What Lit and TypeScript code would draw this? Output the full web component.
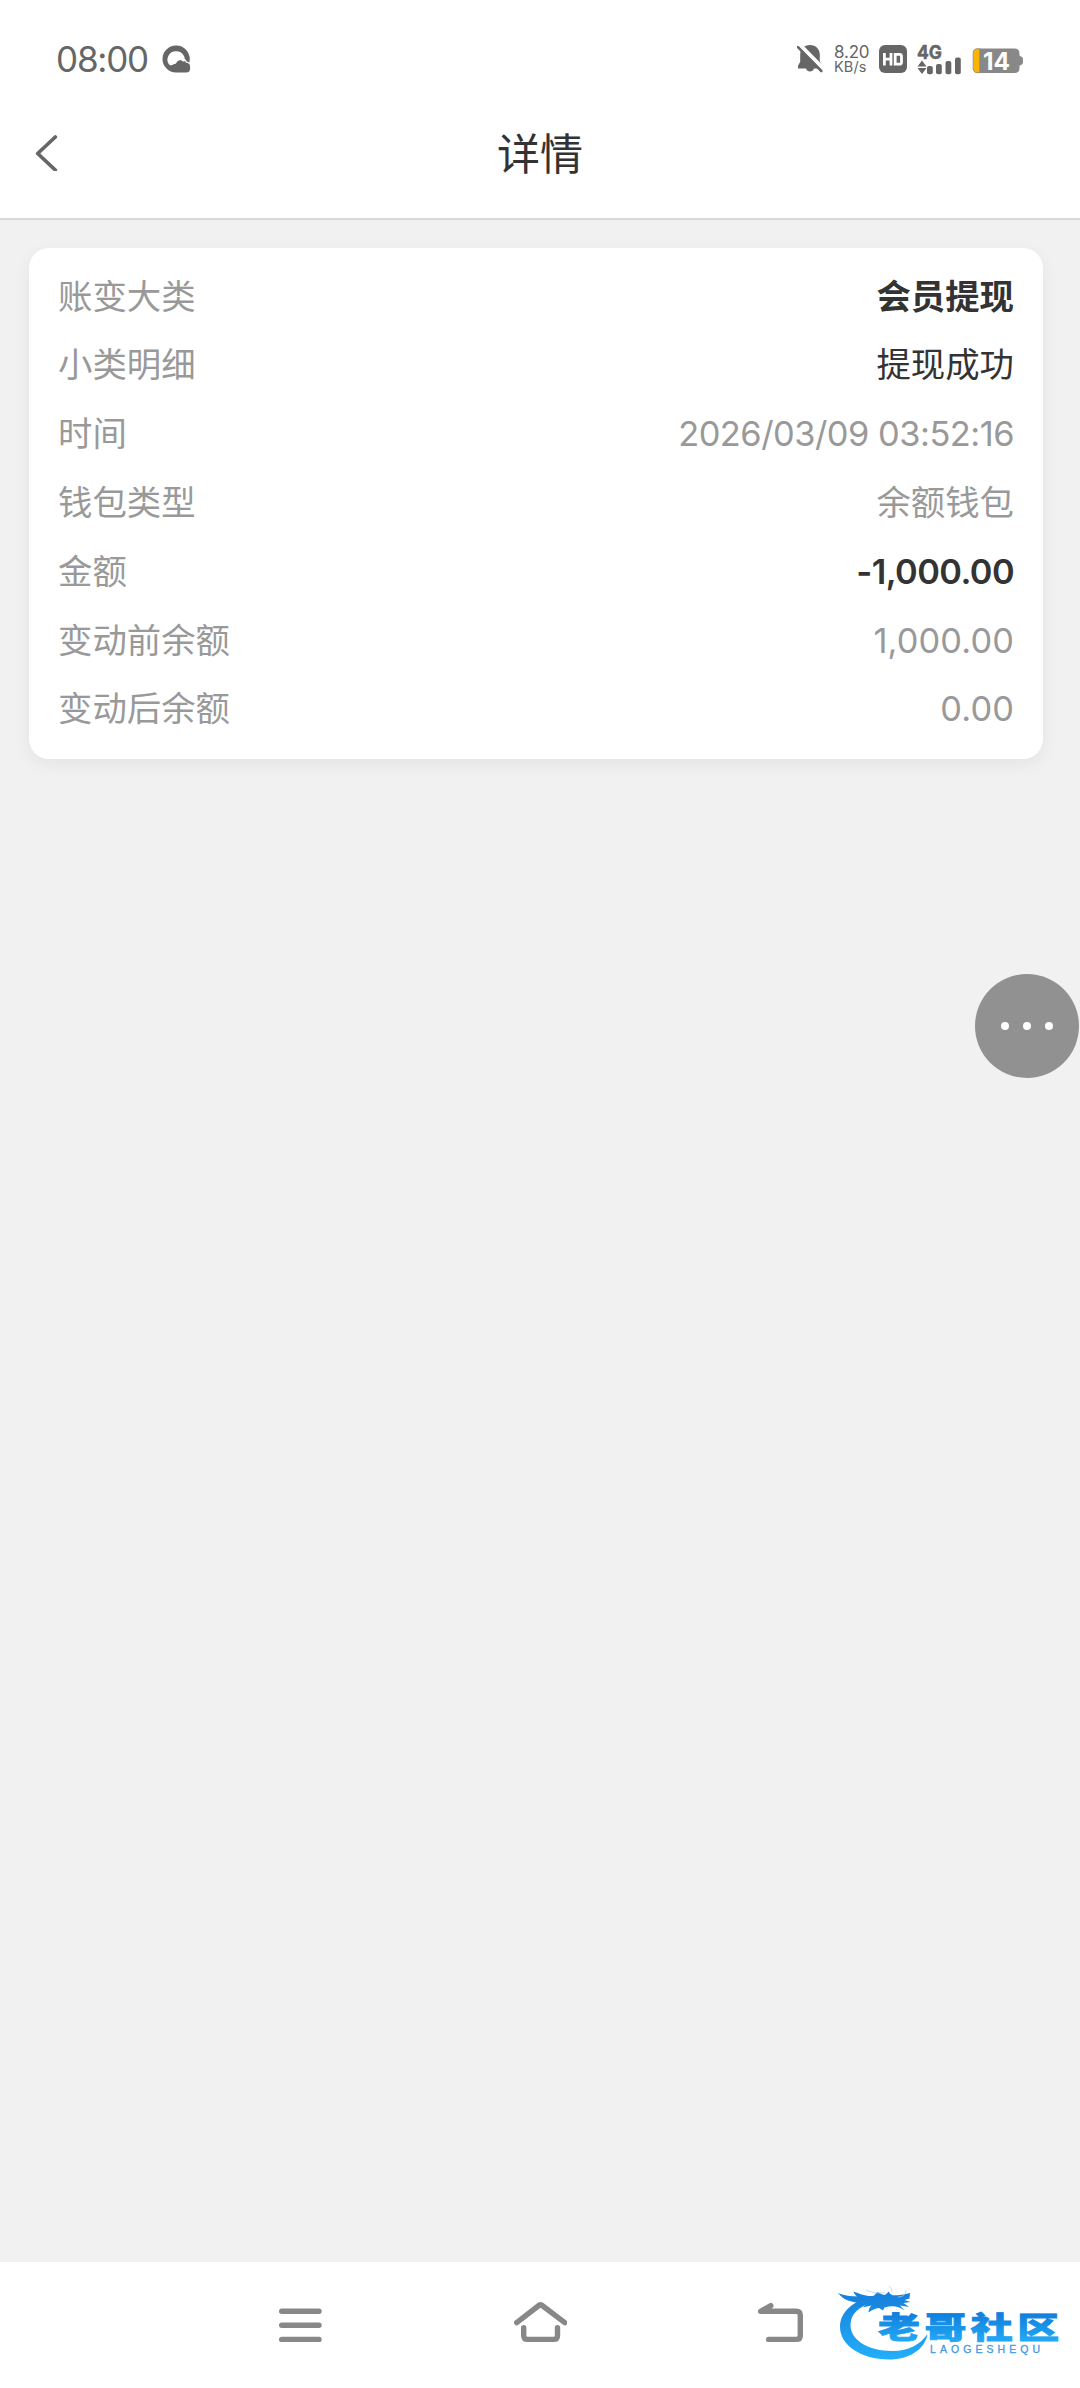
import { LitElement, html, svg, css } from "lit";
import { customElement } from "lit/decorators.js";

interface DetailRow {
  label: string;
  value: string;
  tone: string;
}

const ROWS: DetailRow[] = [
  { label: "账变大类", value: "会员提现", tone: "strong" },
  { label: "小类明细", value: "提现成功", tone: "dark" },
  { label: "时间", value: "2026/03/09 03:52:16", tone: "date" },
  { label: "钱包类型", value: "余额钱包", tone: "muted" },
  { label: "金额", value: "-1,000.00", tone: "strong amount" },
  { label: "变动前余额", value: "1,000.00", tone: "number" },
  { label: "变动后余额", value: "0.00", tone: "number" },
];

const SIGNAL_BARS = [
  { x: 10, y: 22 },
  { x: 19, y: 20 },
  { x: 28.5, y: 17 },
  { x: 38, y: 13.5 },
];

@customElement("status-bar")
export class StatusBar extends LitElement {
  static styles = css`
    :host {
      display: flex;
      height: 118px;
      padding: 0 57px 0 56px;
      justify-content: space-between;
      align-items: center;
      box-sizing: border-box;
      color: #666;
      font-family: Inter, "Noto Sans CJK SC", sans-serif;
    }
    .side {
      display: flex;
      align-items: center;
    }
    .time {
      font-size: 35px;
      line-height: 44px;
      letter-spacing: -1.2px;
    }
    .browser { margin-left: 14px; }
    .speed {
      display: flex;
      flex-direction: column;
      width: 36px;
      margin: 1px 9px 0 11px;
      line-height: 14.5px;
    }
    .rate { font-size: 17px; letter-spacing: -0.2px; }
    .unit { font-size: 14.5px; letter-spacing: 0.1px; }
    .signal { margin-left: 10px; overflow: visible; }
    .battery { margin-left: 9px; margin-top: 3px; overflow: visible; }
    svg { display: block; }
    .bold { font-family: Inter, sans-serif; font-weight: 700; }
  `;

  render() {
    return html`
      <div class="side">
        <span class="time">08:00</span>
        <svg class="browser" width="29" height="28" viewBox="0 0 29 28">
          <path fill="#666" fill-rule="evenodd"
            d="M14 .5A13.500 13.500 0 0 1 27.300 17.500L28 21.500q1 6-4 6H14A13.500 13.500 0 0 1 14 .5zM14.500 6.300a8.300 8.300 0 0 0-7.900 12.500c1.600 2.300 3.500 1.600 5.400.2 1.500.2 2.200-.9 2.700-1.800 1.200-2.500 4.600-2.700 6.300-.7h1.600A8.300 8.300 0 0 0 14.500 6.300z" />
          <path d="M21.600 14.200q2.200.7 2.800 3 1.800.1 3.300 1.500" fill="none" stroke="#fff" stroke-width="1.300" />
        </svg>
      </div>
      <div class="side">
        <svg width="26" height="30" viewBox="0 0 26 30">
          <path fill="#666"
            d="M13 1c5.800 0 9.800 4.200 9.800 9.600v6.600l2.200 4.100v3.200H17a4.200 4.200 0 0 1-8 0H1v-2.700l2.200-4V10.600C3.200 5.200 7.200 1 13 1z" />
          <path d="M2 0L27 25.500" stroke="#fff" stroke-width="4" />
          <path d="M1 3.200L24.300 27" stroke="#666" stroke-width="2.600" stroke-linecap="round" />
        </svg>
        <div class="speed">
          <span class="rate">8.20</span>
          <span class="unit">KB/s</span>
        </div>
        <svg width="28" height="28" viewBox="0 0 28 28">
          <rect width="28" height="28" rx="6" fill="#666" />
          <g fill="none" stroke="#fff" stroke-width="2.800">
            <path d="M5.400 8v12.500M12 8v12.500M5.400 14.200h6.600" />
            <path d="M16.200 9.300h4.300q2 0 2 2v5.900q0 2-2 2h-4.300z" />
          </g>
        </svg>
        <svg class="signal" width="46" height="31" viewBox="0 0 46 31">
          <text class="bold" x="0" y="14.500" font-size="19" textLength="25" lengthAdjust="spacingAndGlyphs"
            fill="#666" stroke="#666" stroke-width=".5">4G</text>
          <path d="M5 16.500l4.500 6h-9zM5 30l4.500-6h-9z" fill="#666" />
          ${SIGNAL_BARS.map(
            (b) => svg`<rect x=${b.x} y=${b.y} width="5.800" height=${30.3 - b.y} rx="2" fill="#666" />`,
          )}
        </svg>
        <svg class="battery" width="51" height="26" viewBox="0 0 51 26">
          <path fill="#888"
            d="M6 .5h36.500q5 0 5 5v2.200l2 1q1.500.8 1.500 2.300v3.500q0 1.500-1.500 2.300l-2 1v2.200q0 5-5 5H6q-5 0-5-5v-14.500q0-5 5-5z" />
          <path fill="#fbb404" stroke="#888" stroke-width=".6" d="M7.700.7v24.100H6q-5 0-5-5V5.700q0-5 5-5z" />
          <text class="bold" x="11" y="21.700" font-size="24" textLength="27" lengthAdjust="spacingAndGlyphs"
            fill="#fff">14</text>
        </svg>
      </div>
    `;
  }
}

@customElement("title-bar")
export class TitleBar extends LitElement {
  static styles = css`
    :host {
      display: grid;
      grid-template-columns: 1fr auto 1fr;
      align-items: center;
      height: 102px;
      padding: 0 35px 30px;
      box-sizing: border-box;
      border-bottom: 2px solid #d9d9d9;
    }
    .title {
      font-size: 43px;
      line-height: 60px;
      margin-bottom: 4px;
      color: #333;
      font-family: "Noto Sans CJK SC", sans-serif;
    }
    svg { display: block; }
  `;

  render() {
    return html`
      <svg width="26" height="36" viewBox="0 0 26 36">
        <path d="M20.300 2L2.700 18.500l17.600 16.500" fill="none" stroke="#666" stroke-width="3.700"
          stroke-linecap="round" stroke-linejoin="round" />
      </svg>
      <span class="title">详情</span>
    `;
  }
}

@customElement("detail-card")
export class DetailCard extends LitElement {
  static styles = css`
    :host {
      display: flex;
      flex-direction: column;
      padding: 14.6px 29px 14.8px;
      background: #fff;
      border-radius: 20px;
      box-shadow: 0 5px 18px rgba(0, 0, 0, 0.06);
      font-family: Inter, "Noto Sans CJK SC", sans-serif;
      font-size: 34.4px;
      color: #999;
    }
    .row {
      display: flex;
      justify-content: space-between;
      align-items: center;
      height: 68.8px;
      line-height: 68.8px;
      white-space: nowrap;
    }
    .strong { color: #333; font-weight: 700; }
    .dark { color: #333; }
    .date { letter-spacing: -0.5px; }
    .number { letter-spacing: 0.1px; }
    .amount { font-weight: 600; letter-spacing: -0.6px; }
  `;

  render() {
    return ROWS.map(
      (r) => html`
        <div class="row">
          <span>${r.label}</span>
          <span class=${r.tone}>${r.value}</span>
        </div>
      `,
    );
  }
}

@customElement("nav-bar")
export class NavBar extends LitElement {
  static styles = css`
    :host {
      display: grid;
      grid-template-columns: repeat(3, 54px);
      column-gap: 186px;
      justify-content: center;
      height: 126px;
      padding-top: 38px;
      box-sizing: border-box;
      background: #fff;
    }
    svg {
      display: block;
      fill: none;
      stroke: #888;
      stroke-width: 5.4;
      stroke-linecap: round;
      stroke-linejoin: round;
    }
  `;

  render() {
    return html`
      <svg width="54" height="46" viewBox="0 0 54 46">
        <path d="M8.700 11.300h37.300M8.700 25.300h37.300M8.700 39.400h37.300" />
      </svg>
      <svg width="54" height="46" viewBox="0 0 54 46">
        <path d="M3.700 22.700L26.500 5q1-.7 2 0l23.300 17.700" />
        <path d="M10.700 27.700v7.700q0 4 4 4h25.800q4 0 4-4v-7.700" />
      </svg>
      <svg width="54" height="46" viewBox="0 0 54 46">
        <path d="M15.700 39.400h27.600q4 0 4-4V15.300q0-4-4-4H7.600L17.800 5.700" />
      </svg>
    `;
  }
}

@customElement("community-mark")
export class CommunityMark extends LitElement {
  static styles = css`
    :host { display: block; }
    svg { display: block; }
    .name { font-family: "Noto Sans CJK SC", sans-serif; font-weight: 900; }
    .latin { font-family: "Liberation Sans", sans-serif; }
  `;

  render() {
    return html`
      <svg width="240" height="84" viewBox="0 0 240 84">
        <defs>
          <linearGradient id="ring" x1="0" y1="8" x2="0" y2="74" gradientUnits="userSpaceOnUse">
            <stop offset="0" stop-color="#1580dc" />
            <stop offset="1" stop-color="#22b0fa" />
          </linearGradient>
          <linearGradient id="ink" x1="0" y1="-25" x2="0" y2="3" gradientUnits="userSpaceOnUse">
            <stop offset="0" stop-color="#0f7fdd" />
            <stop offset="1" stop-color="#22a9f5" />
          </linearGradient>
        </defs>
        <path fill="url(#ring)"
          d="M38 11C18 13 4 26 4 41c0 18 21 32.500 49 32.500 20 0 36-10 38.500-25.500-7 10-18 17-35 17C32 65 14.500 54 14.500 39c0-11 8-19 24-23z" />
        <path fill="url(#ring)"
          d="M2 7c7 3 13 3 19 3.500-2-2-3-3-3.500-5 8 3 13 5 20 4.500l4-4c2 1 4 2.500 7 3 2-1 3-2 4-3.500 1 1.500 2 3 4 3.800 6 .2 11-.8 17.500-2.300l-.5 5.500-5 1.500 6 2-7 1 5.500 4-9-1.500 4.500 5c-7-5-13-5-20-3l-1.500 3-4-2.500c-4 .5-7 2-10.500 4.500 0-3 1-5 3-7l-9 2c2-2 4-3.500 6-4.500C18 17.500 8 15 2 7z" />
        <path fill="none" stroke="#a9d2f4" stroke-width=".8" d="M30 4c7 3 14 3 19 3M56 6c0-5-4-7-8-8M62 11c5 0 8-3 8-7" />
        <g transform="translate(42 52.300) scale(1.400 1)">
          <text class="name" x="0" y="0" font-size="30" textLength="129.500" lengthAdjust="spacing"
            fill="url(#ink)" stroke="url(#ink)" stroke-width=".8">老哥社区</text>
        </g>
        <text class="latin" x="94" y="66.500" font-size="10.500" textLength="110" lengthAdjust="spacing"
          fill="#3f9be3" stroke="#3f9be3" stroke-width=".3">LAOGESHEQU</text>
      </svg>
    `;
  }
}

@customElement("app-root")
export class AppRoot extends LitElement {
  static styles = css`
    :host {
      display: flex;
      flex-direction: column;
      position: relative;
      height: 2388px;
      background: #f1f1f1;
      overflow: hidden;
    }
    .header { background: #fff; }
    .content {
      flex: 1;
      padding: 28px 37px 0 29px;
    }
    .more {
      position: absolute;
      right: 1px;
      top: 974px;
      width: 104px;
      height: 104px;
      border-radius: 50%;
      background: #919191;
      display: flex;
      align-items: center;
      justify-content: center;
      gap: 14px;
    }
    .dot {
      width: 8px;
      height: 8px;
      border-radius: 50%;
      background: #fff;
    }
    .mark {
      position: absolute;
      left: 836px;
      top: 2286px;
    }
  `;

  render() {
    return html`
      <div class="header">
        <status-bar></status-bar>
        <title-bar></title-bar>
      </div>
      <div class="content"><detail-card></detail-card></div>
      <nav-bar></nav-bar>
      <div class="more"><span class="dot"></span><span class="dot"></span><span class="dot"></span></div>
      <community-mark class="mark"></community-mark>
    `;
  }
}
